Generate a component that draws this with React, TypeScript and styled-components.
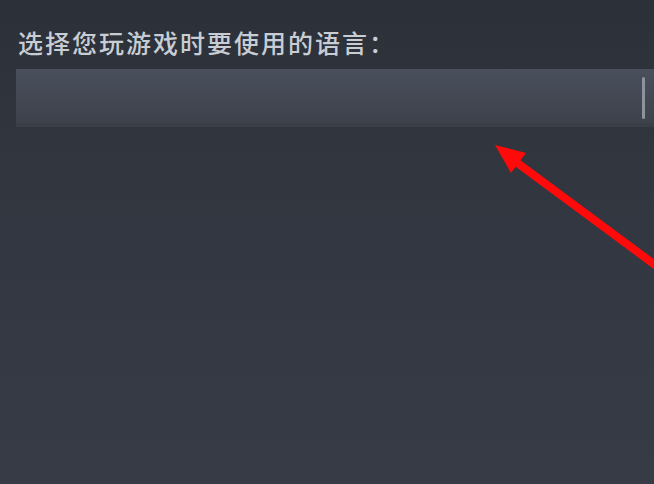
import React from "react";
import styled, { createGlobalStyle } from "styled-components";

const Global = createGlobalStyle`
  html, body { margin: 0; padding: 0; }
  body {
    width: 654px;
    height: 484px;
    overflow: hidden;
    background: #333842;
    font-family: "Noto Sans CJK SC", "Noto Sans", sans-serif;
  }
`;

const Page = styled.div`
  position: relative;
  width: 654px;
  height: 484px;
  box-sizing: border-box;
  padding: 24px 0 0 16px;
  background: linear-gradient(180deg, #2c3039 0%, #30353e 30%, #343944 70%, #363b46 100%);
  overflow: hidden;
  display: flex;
  flex-direction: column;
  gap: 9px;
`;

const Label = styled.div`
  color: #c8cdd4;
  font-size: 25px;
  font-weight: 500;
  line-height: 36px;
  letter-spacing: 2px;
  padding-left: 2px;
`;

const Select = styled.div`
  height: 58px;
  margin-right: -10px;
  background: linear-gradient(180deg, #4a505b 0%, #454b56 35%, #3f444e 75%, #3b4049 100%);
  box-shadow: inset 0 -4px 0 #393e47;
  display: flex;
  align-items: center;
  justify-content: flex-end;
  padding-right: 19px;
`;

const Bar = styled.div`
  width: 3px;
  height: 42px;
  border-radius: 2px;
  background: #8d929b;
`;

const Arrow = styled.svg`
  position: absolute;
  left: 0;
  top: 0;
  pointer-events: none;
`;

export default function App() {
  return (
    <>
      <Global />
      <Page>
        <Label>选择您玩游戏时要使用的语言：</Label>
        <Select>
          <Bar />
        </Select>
        <Arrow width="654" height="484" viewBox="0 0 654 484">
          <line x1="512" y1="159" x2="670" y2="276" stroke="#ff0a0a" strokeWidth="8" />
          <polygon points="495,145 526,153 511,173" fill="#ff0a0a" />
        </Arrow>
      </Page>
    </>
  );
}
